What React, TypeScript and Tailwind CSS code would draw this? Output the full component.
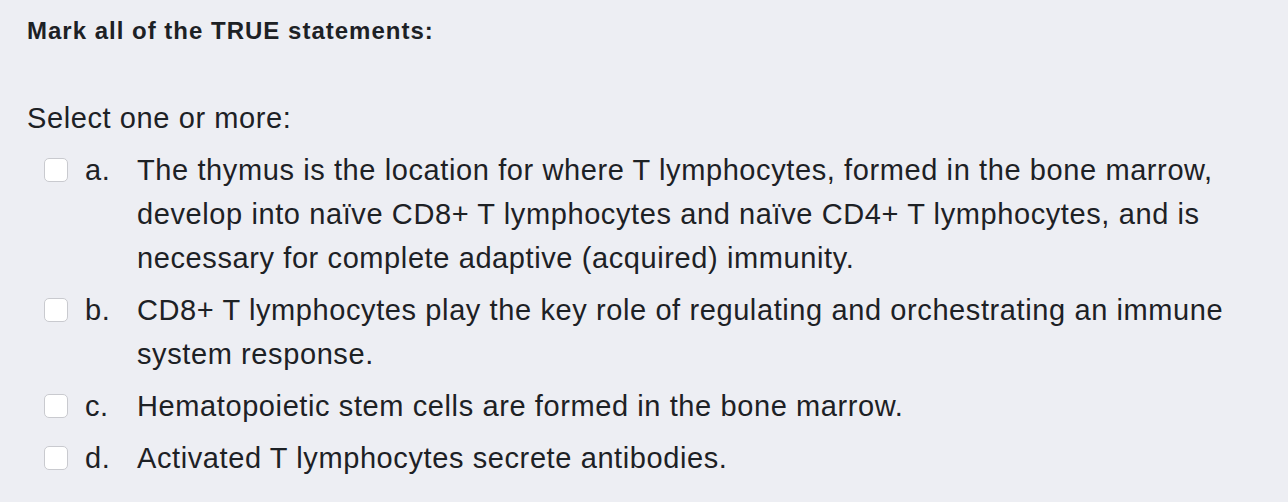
import React from "react";

const options = [
  {
    letter: "a.",
    text: "The thymus is the location for where T lymphocytes, formed in the bone marrow, develop into naïve CD8+ T lymphocytes and naïve CD4+ T lymphocytes, and is necessary for complete adaptive (acquired) immunity.",
  },
  {
    letter: "b.",
    text: "CD8+ T lymphocytes play the key role of regulating and orchestrating an immune system response.",
  },
  { letter: "c.", text: "Hematopoietic stem cells are formed in the bone marrow." },
  { letter: "d.", text: "Activated T lymphocytes secrete antibodies." },
];

const App = () => {
  return (
    <div className="w-[1288px] h-[502px] bg-[#edeef3] text-[#1d2125] font-['Liberation_Sans',Arial,sans-serif] pl-[27px] pt-[17px] overflow-hidden">
      <h2 className="text-[24px] font-bold leading-[28px] tracking-[1px]">Mark all of the TRUE statements:</h2>
      <p className="mt-[51px] text-[29px] leading-[44px] tracking-[0.6px]">Select one or more:</p>
      <div className="mt-[4px] pl-[17px] w-[1220px]">
        {options.map((o) => (
          <label key={o.letter} className="flex items-start py-[4px] text-[29px] leading-[44px] tracking-[0.6px]">
            <span className="mt-[10px] w-[24px] h-[24px] shrink-0 rounded-[5px] border border-[#c9cacf] bg-white" />
            <span className="w-[52px] shrink-0 ml-[17px]">{o.letter}</span>
            <span className="w-[1095px]">{o.text}</span>
          </label>
        ))}
      </div>
    </div>
  );
};

export default App;
